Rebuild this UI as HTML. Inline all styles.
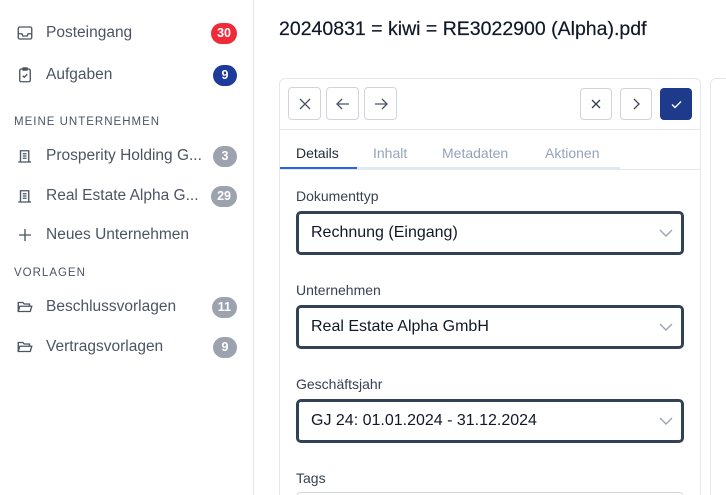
<!DOCTYPE html>
<html style="overflow:hidden;height:495px"><head><meta charset="utf-8"><style>
*{box-sizing:border-box;margin:0;padding:0}
body{width:726px;height:495px;overflow:hidden;background:#fff;font-family:"Liberation Sans",sans-serif;position:relative;color:#1f2937}
.side{position:absolute;left:0;top:0;width:254px;height:495px;border-right:1px solid #e5e7eb;background:#fff}
.item{position:absolute;left:0;width:254px;height:30px;display:flex;align-items:center;font-size:15.5px;color:#4b5563}
.item svg{position:absolute;left:16px}
.item span.t{position:absolute;left:46px}
.badge{position:absolute;right:17px;height:21px;min-width:24px;padding:0 6px;border-radius:11px;font-size:12.5px;font-weight:bold;color:#fff;display:flex;align-items:center;justify-content:center;background:#9ca3af}
.sec{position:absolute;left:14px;font-size:11.5px;letter-spacing:1px;color:#4b5563;font-weight:500}
h1{position:absolute;left:279px;top:18px;font-size:19.5px;font-weight:500;color:#111827;white-space:nowrap;-webkit-text-stroke:0.2px #111827}
.card{position:absolute;left:279px;top:78px;width:422px;height:417px;border:1px solid #e5e7eb;border-bottom:none;border-radius:6px 6px 0 0;overflow:hidden}
.card2{position:absolute;left:710px;top:78px;width:16px;height:417px;border:1px solid #e5e7eb;border-right:none;border-bottom:none;border-radius:6px 0 0 0}
.btn{position:absolute;width:33px;height:33px;border:1px solid #d1d5db;border-radius:4px;display:flex;align-items:center;justify-content:center;background:#fff}
.tb{position:absolute;left:0;top:50px;width:420px;border-top:1px solid #e5e7eb}
.tab{position:absolute;top:66px;font-size:14px;color:#94a3b8}
.lbl{position:absolute;left:16px;font-size:14px;color:#374151}
.sel{position:absolute;left:16px;width:388px;height:44px;border:3px solid #334155;border-radius:5px;font-size:16px;color:#111827;padding-left:12px;display:flex;align-items:center}
.sel svg{position:absolute;right:8px}
</style></head><body>
<div class="side">
 <div class="item" style="top:18px"><svg width="18" height="18" viewBox="0 0 24 24" fill="none" stroke="#4b5563" stroke-width="1.8"><rect x="3" y="4" width="18" height="16" rx="2"/><path d="M3 13h5l1 3h6l1-3h5"/></svg><span class="t">Posteingang</span><span class="badge" style="background:#ef2b3a">30</span></div>
 <div class="item" style="top:60px"><svg width="18" height="18" viewBox="0 0 24 24" fill="none" stroke="#4b5563" stroke-width="1.8"><rect x="5" y="4" width="14" height="17" rx="2"/><rect x="9" y="2.5" width="6" height="3" rx="1"/><path d="M9 13l2 2 4-4"/></svg><span class="t">Aufgaben</span><span class="badge" style="background:#1e3a9a">9</span></div>
 <div class="sec" style="top:116px">MEINE UNTERNEHMEN</div>
 <div class="item" style="top:141px"><svg width="18" height="18" viewBox="0 0 24 24" fill="none" stroke="#4b5563" stroke-width="1.8"><path d="M6 20V5h11v15M3 20h17M9 9h5M9 12h5M9 15h5"/></svg><span class="t">Prosperity Holding G...</span><span class="badge">3</span></div>
 <div class="item" style="top:181px"><svg width="18" height="18" viewBox="0 0 24 24" fill="none" stroke="#4b5563" stroke-width="1.8"><path d="M6 20V5h11v15M3 20h17M9 9h5M9 12h5M9 15h5"/></svg><span class="t">Real Estate Alpha G...</span><span class="badge">29</span></div>
 <div class="item" style="top:220px"><svg width="18" height="18" viewBox="0 0 24 24" fill="none" stroke="#4b5563" stroke-width="1.8"><path d="M12 4v16M4 12h16"/></svg><span class="t">Neues Unternehmen</span></div>
 <div class="sec" style="top:267px">VORLAGEN</div>
 <div class="item" style="top:292px"><svg width="18" height="18" viewBox="0 0 24 24" fill="none" stroke="#4b5563" stroke-width="1.8"><path d="M3 18V6h6l2 2h7v3M3 18l2-7h16l-2 7z"/></svg><span class="t">Beschlussvorlagen</span><span class="badge">11</span></div>
 <div class="item" style="top:332px"><svg width="18" height="18" viewBox="0 0 24 24" fill="none" stroke="#4b5563" stroke-width="1.8"><path d="M3 18V6h6l2 2h7v3M3 18l2-7h16l-2 7z"/></svg><span class="t">Vertragsvorlagen</span><span class="badge">9</span></div>
</div>
<h1>20240831 = kiwi = RE3022900 (Alpha).pdf</h1>
<div class="card2"></div>
<div class="card">
 <div class="btn" style="left:8px;top:8px"><svg width="12" height="12" viewBox="0 0 12 12" stroke="#4b5563" stroke-width="1.3"><path d="M1 1l10 10M11 1L1 11"/></svg></div>
 <div class="btn" style="left:46px;top:8px"><svg width="14" height="12" viewBox="0 0 14 12" fill="none" stroke="#4b5563" stroke-width="1.3"><path d="M13 6H1M6 1L1 6l5 5"/></svg></div>
 <div class="btn" style="left:84px;top:8px"><svg width="14" height="12" viewBox="0 0 14 12" fill="none" stroke="#4b5563" stroke-width="1.3"><path d="M1 6h12M8 1l5 5-5 5"/></svg></div>
 <div class="btn" style="left:300px;top:9px;width:32px;height:32px"><svg width="10" height="10" viewBox="0 0 10 10" stroke="#374151" stroke-width="1.3"><path d="M1 1l8 8M9 1L1 9"/></svg></div>
 <div class="btn" style="left:340px;top:9px;width:32px;height:32px"><svg width="8" height="12" viewBox="0 0 8 12" fill="none" stroke="#374151" stroke-width="1.3"><path d="M2 1l5 5-5 5"/></svg></div>
 <div class="btn" style="left:380px;top:9px;width:32px;height:32px;background:#1e3a8a;border-color:#1e3a8a"><svg width="11" height="9" viewBox="0 0 11 9" fill="none" stroke="#fff" stroke-width="1.4"><path d="M1 4.5l3 3 6-6"/></svg></div>
 <div class="tb"></div>
 <div class="tab" style="left:16px;color:#1f2937;font-weight:500">Details</div>
 <div class="tab" style="left:93px">Inhalt</div>
 <div class="tab" style="left:162px">Metadaten</div>
 <div class="tab" style="left:265px">Aktionen</div>
 <div style="position:absolute;left:0;top:88px;width:340px;height:2px;background:#e2e8f0"></div>
 <div style="position:absolute;left:0;top:88px;width:77px;height:2px;background:#2563eb"></div>
 <div style="position:absolute;left:0;top:90px;width:420px;border-top:1px solid #e5e7eb"></div>
 <div class="lbl" style="top:109px">Dokumenttyp</div>
 <div class="sel" style="top:132px">Rechnung (Eingang)<svg width="14" height="8" viewBox="0 0 14 8" fill="none" stroke="#9ca3af" stroke-width="1.4"><path d="M1 1l6 6 6-6"/></svg></div>
 <div class="lbl" style="top:203px">Unternehmen</div>
 <div class="sel" style="top:226px">Real Estate Alpha GmbH<svg width="14" height="8" viewBox="0 0 14 8" fill="none" stroke="#9ca3af" stroke-width="1.4"><path d="M1 1l6 6 6-6"/></svg></div>
 <div class="lbl" style="top:297px">Geschäftsjahr</div>
 <div class="sel" style="top:320px">GJ 24: 01.01.2024 - 31.12.2024<svg width="14" height="8" viewBox="0 0 14 8" fill="none" stroke="#9ca3af" stroke-width="1.4"><path d="M1 1l6 6 6-6"/></svg></div>
 <div class="lbl" style="top:391px">Tags</div>
 <div style="position:absolute;left:16px;top:413px;width:388px;height:40px;border:1px solid #d1d5db;border-radius:5px"></div>
</div>
</body></html>
